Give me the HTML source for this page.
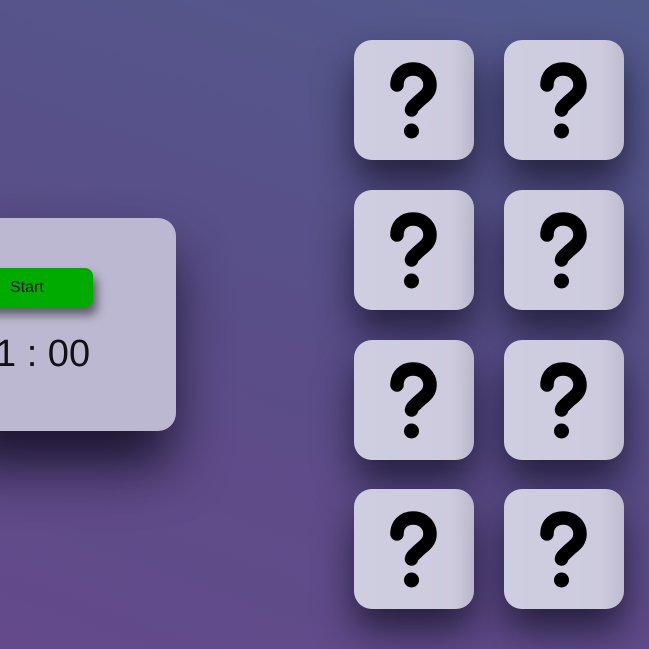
<!DOCTYPE html>
<html><head><style>
html,body{margin:0;width:649px;height:649px;overflow:hidden}
body{background:linear-gradient(20deg,#644a8a 0%,#5a4d88 45%,#525a8c 100%);position:relative;font-family:"Liberation Sans",sans-serif}
.panel{position:absolute;left:-40px;top:218px;width:216px;height:213px;background:#bdb8d2;border-radius:18px;box-shadow:-5px 35px 55px rgba(15,10,30,.85)}
.btn{position:absolute;left:-20px;top:268px;width:113px;height:39px;background:#00ab00;border-radius:8px;box-shadow:4px 8px 10px rgba(0,0,0,.5);font-size:16px;line-height:39px;color:#111}
.btn span{position:absolute;left:30px}
.timer{position:absolute;left:-5px;top:333px;font-size:38px;color:#111;white-space:pre}
.card{position:absolute;width:120px;height:120px;background:linear-gradient(90deg,#cfcee1 0%,#cdcbdd 80%,#bfbcd0 100%);border-radius:18px;box-shadow:0 22px 38px rgba(20,16,40,.75)}
.card svg{position:absolute;left:0;top:0}
</style></head><body>
<div class="panel"></div>
<div class="btn"><span>Start</span></div>
<div class="timer">1 : 00</div>
<div class="card" style="left:354px;top:40px"><svg width="120" height="120"><path d="M43,45 C43,35 50,29 59,29 C69,29 76,36 76,45 C76,54 69,57 64,62 C60,66 58,67 57.5,70" fill="none" stroke="#000" stroke-width="13.5" stroke-linecap="round"/><circle cx="57.5" cy="91" r="7.5" fill="#000"/></svg></div>
<div class="card" style="left:504px;top:40px"><svg width="120" height="120"><path d="M43,45 C43,35 50,29 59,29 C69,29 76,36 76,45 C76,54 69,57 64,62 C60,66 58,67 57.5,70" fill="none" stroke="#000" stroke-width="13.5" stroke-linecap="round"/><circle cx="57.5" cy="91" r="7.5" fill="#000"/></svg></div>
<div class="card" style="left:354px;top:190px"><svg width="120" height="120"><path d="M43,45 C43,35 50,29 59,29 C69,29 76,36 76,45 C76,54 69,57 64,62 C60,66 58,67 57.5,70" fill="none" stroke="#000" stroke-width="13.5" stroke-linecap="round"/><circle cx="57.5" cy="91" r="7.5" fill="#000"/></svg></div>
<div class="card" style="left:504px;top:190px"><svg width="120" height="120"><path d="M43,45 C43,35 50,29 59,29 C69,29 76,36 76,45 C76,54 69,57 64,62 C60,66 58,67 57.5,70" fill="none" stroke="#000" stroke-width="13.5" stroke-linecap="round"/><circle cx="57.5" cy="91" r="7.5" fill="#000"/></svg></div>
<div class="card" style="left:354px;top:340px"><svg width="120" height="120"><path d="M43,45 C43,35 50,29 59,29 C69,29 76,36 76,45 C76,54 69,57 64,62 C60,66 58,67 57.5,70" fill="none" stroke="#000" stroke-width="13.5" stroke-linecap="round"/><circle cx="57.5" cy="91" r="7.5" fill="#000"/></svg></div>
<div class="card" style="left:504px;top:340px"><svg width="120" height="120"><path d="M43,45 C43,35 50,29 59,29 C69,29 76,36 76,45 C76,54 69,57 64,62 C60,66 58,67 57.5,70" fill="none" stroke="#000" stroke-width="13.5" stroke-linecap="round"/><circle cx="57.5" cy="91" r="7.5" fill="#000"/></svg></div>
<div class="card" style="left:354px;top:489px"><svg width="120" height="120"><path d="M43,45 C43,35 50,29 59,29 C69,29 76,36 76,45 C76,54 69,57 64,62 C60,66 58,67 57.5,70" fill="none" stroke="#000" stroke-width="13.5" stroke-linecap="round"/><circle cx="57.5" cy="91" r="7.5" fill="#000"/></svg></div>
<div class="card" style="left:504px;top:489px"><svg width="120" height="120"><path d="M43,45 C43,35 50,29 59,29 C69,29 76,36 76,45 C76,54 69,57 64,62 C60,66 58,67 57.5,70" fill="none" stroke="#000" stroke-width="13.5" stroke-linecap="round"/><circle cx="57.5" cy="91" r="7.5" fill="#000"/></svg></div>
</body></html>
